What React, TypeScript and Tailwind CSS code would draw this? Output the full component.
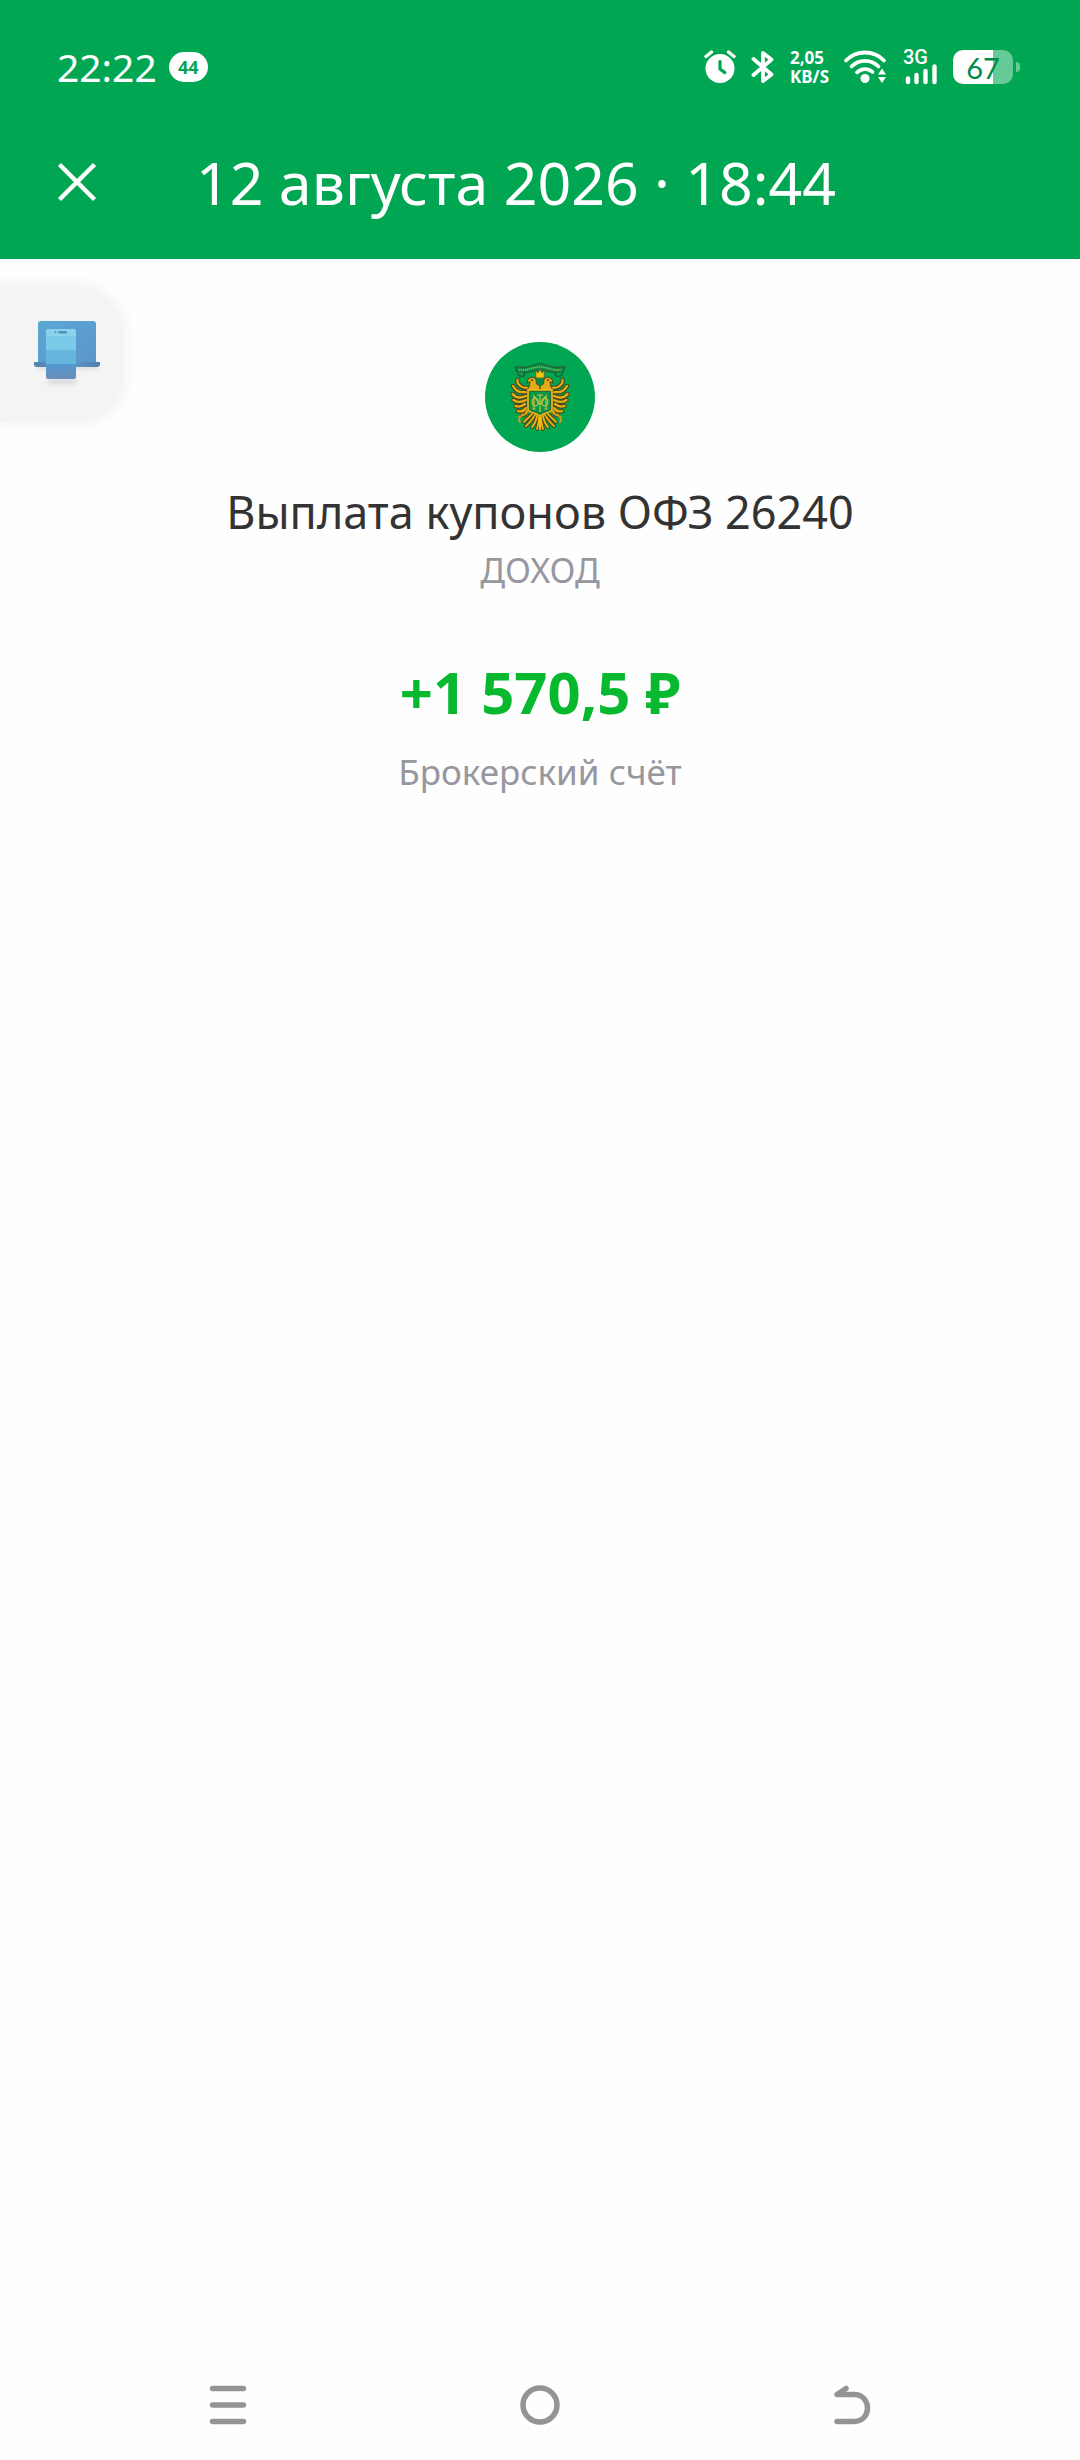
import type { ReactNode } from 'react'

const operation = {
  date: '12 августа 2026 · 18:44',
  title: 'Выплата купонов ОФЗ 26240',
  kind: 'ДОХОД',
  amount: '+1 570,5 ₽',
  account: 'Брокерский счёт',
}

function AlarmIcon() {
  return (
    <svg viewBox="0 0 32 34" className="h-[34px] w-8" fill="none" aria-hidden="true">
      <path d="M2 6.5 7.5 2M30 6.5 24.500 2" stroke="#fff" strokeWidth="3.400" strokeLinecap="round" />
      <circle cx="16" cy="18.500" r="14.500" fill="#fff" />
      <path d="M16 11.500v7.500l4.800 3.600" stroke="#00a651" strokeWidth="3.200" strokeLinecap="round" strokeLinejoin="round" />
    </svg>
  )
}

function BluetoothIcon() {
  return (
    <svg viewBox="0 0 24 34" className="h-[34px] w-6" fill="none" aria-hidden="true">
      <path d="M2.500 9 20.500 24.500 12 31V3l8.500 6.500L2.500 25" stroke="#fff" strokeWidth="3.800" strokeLinecap="round" strokeLinejoin="round" />
    </svg>
  )
}

function WifiIcon() {
  return (
    <svg viewBox="0 0 44 36" className="h-9 w-11" fill="none" aria-hidden="true">
      <path d="M3 11.500C13.500.800 30.500.800 41 11.500M8.500 17.500c7.500-7.600 19.500-7.600 27 0M14 23.300c4.500-4.300 11.500-4.300 15.500-.3" stroke="#fff" strokeWidth="3.800" strokeLinecap="round" />
      <circle cx="22" cy="29.500" r="4.500" fill="#fff" />
      <path d="M39 19.500 43 25.500h-8zM39 34l-4-6h8z" fill="#fff" />
    </svg>
  )
}

function SignalIcon() {
  return (
    <svg viewBox="0 0 34 22" className="h-[22px] w-[34px]" fill="none" aria-hidden="true">
      <path d="M5 15.500v3.500M13.500 12v7M22.500 8v11M31.500 3.500V19" stroke="#fff" strokeWidth="4.400" strokeLinecap="round" />
    </svg>
  )
}

function Battery() {
  return (
    <div className="flex items-center gap-[3px]">
      <div className="flex h-[34px] w-[60px] items-center justify-center rounded-[10px] bg-linear-to-r from-white from-67% to-[#66ca97] to-67% font-['Lato',sans-serif] text-[29px] leading-none text-[#008b4a]">
        67
      </div>
      <div className="h-2.5 w-1 rounded-r-full bg-[#66ca97]" />
    </div>
  )
}

function StatusBar() {
  return (
    <div className="flex h-[134px] items-center justify-between pr-[60px] pl-[57px]">
      <div className="flex items-center gap-3">
        <span className="text-[39px] leading-12">22:22</span>
        <span className="flex h-[30px] w-[39px] items-center justify-center rounded-full bg-white text-lg leading-none font-bold text-[#00a651]">44</span>
      </div>
      <div className="flex items-center">
        <AlarmIcon />
        <div className="ml-[15px]"><BluetoothIcon /></div>
        <div className="ml-[15px] flex flex-col text-[17px] leading-[19px] font-bold">
          <span>2,05</span>
          <span>KB/S</span>
        </div>
        <div className="ml-[14px]"><WifiIcon /></div>
        <div className="ml-4 flex flex-col">
          <span className="h-3.5 font-['Roboto',sans-serif] text-xl leading-4 font-medium">3G</span>
          <SignalIcon />
        </div>
        <div className="ml-4"><Battery /></div>
      </div>
    </div>
  )
}

const feathers =
  'M42 46C36 46 32 42 32.500 38M41 50c-7 1-11-2-13-6M41 54c-7 3-11 1-13.500-2M41 58c-5 3-10 2-12.500 0M40 62c-4 3-7 3-9.500 2M41 66c-2 3-5 4-8 3M42 69c-1 3-3 4-5 4'
const tailFeathers =
  'M50 73c-3 4-4 7-9 11M52 74c-1 5-2 8-5 11M54 75c0 5-1 8-2 12M47 72c-3 4-6 5-8 8'

function Emblem() {
  return (
    <svg viewBox="0 0 110 110" className="size-[110px]" fill="none" role="img" aria-label={operation.title}>
      <defs>
        <g id="half" strokeLinecap="round">
          <path d={feathers} stroke="#4b431c" strokeWidth="4.400" />
          <path d={tailFeathers} stroke="#4b431c" strokeWidth="3.800" />
          <path d={feathers} stroke="#e3ae12" strokeWidth="2.300" />
          <path d={tailFeathers} stroke="#e9b70f" strokeWidth="1.800" />
          {/* leg and claw */}
          <path d="M43 70c-2 3-6 3-9 5M37 74c-3 1-4 4-2 6" stroke="#c99c18" strokeWidth="1.800" />
          {/* head with beak */}
          <path d="m42 41 1.500-4.500 4-1.500 3.500 2 .5 5 3.500 2v5H41l3-4 1-5z" fill="#e2aa17" stroke="#574818" strokeWidth="1" />
          <circle cx="47" cy="38" r=".9" fill="#3e3517" />
        </g>
      </defs>
      <circle cx="55" cy="55" r="55" fill="#00a651" />
      {/* ribbon */}
      <path d="M30 25c4-1 6 1 10 .5 8-1.500 11-4 15-4s7 2.500 15 4c4 .5 6-1.500 10-.5l-2 5c-4-1-7 1-12 0-5-1-7-2-11-2s-6 1-11 2c-5 1-8-1-12 0z" fill="#07924a" stroke="#275a30" strokeWidth="1.200" />
      <path d="M34 28c6 1.500 13-3 21-3s15 4.500 21 3" stroke="#a9bd36" strokeWidth="1.400" strokeDasharray="1.200 .8" />
      <path d="M33 31c0 3 2 4 6 3l1-3M77 31c0 3-2 4-6 3l-1-3" stroke="#1f5f35" strokeWidth="1.600" />
      <use href="#half" />
      <use href="#half" transform="matrix(-1 0 0 1 110 0)" />
      <path d="M55 75v12" stroke="#edba0d" strokeWidth="2" strokeLinecap="round" />
      {/* crown */}
      <path d="m50.500 28 2.500 3 2-4 2 4 2.500-3-.5 8h-8z" fill="#f6c713" stroke="#63511b" strokeWidth=".8" />
      <path d="M51.500 37h7v4L55 44l-3.500-3z" fill="#078a43" />
      {/* shield with monogram */}
      <path d="M43 48h24v19c0 4-8 3-12 7-4-4-12-3-12-7z" fill="#06984a" stroke="#efb91b" strokeWidth="1.600" />
      <path d="M44.500 49.500h21v17.500c0 2.500-7 2-10.500 5-3.500-3-10.500-2.500-10.500-5z" stroke="#3f5a28" strokeWidth=".8" />
      <path d="M49 67V54l6 9 6-9v13M47.500 67h3M59.500 67h3M55 52.500V70M52 53h6" stroke="#c8c340" strokeWidth="1.200" />
      <ellipse cx="50.200" cy="60" rx="3" ry="4" stroke="#c8c340" strokeWidth="1.100" />
      <ellipse cx="59.800" cy="60" rx="3" ry="4" stroke="#c8c340" strokeWidth="1.100" />
    </svg>
  )
}

function DevicesIcon() {
  return (
    <svg viewBox="0 0 66 66" className="size-[66px]" aria-hidden="true">
      <defs>
        <linearGradient id="laptop" x1="0" y1="0" x2="1" y2="1">
          <stop stopColor="#5aa8d4" />
          <stop offset="1" stopColor="#5c94ca" />
        </linearGradient>
        <linearGradient id="base" x1="0" x2="1">
          <stop stopColor="#527fae" />
          <stop offset=".5" stopColor="#5b9bd0" />
          <stop offset="1" stopColor="#527fae" />
        </linearGradient>
        <linearGradient id="phone" x1="0" y1="0" x2="0" y2="1">
          <stop offset=".7" stopColor="#5498d1" />
          <stop offset="1" stopColor="#6a8fb8" />
        </linearGradient>
        <filter id="soft" x="-30%" y="-80%" width="160%" height="260%">
          <feGaussianBlur stdDeviation="2" />
        </filter>
      </defs>
      <path d="M3 44h60v4H3zM14 58h28v5H14z" fill="#d9d9dd" filter="url(#soft)" />
      <rect x="4" y="0" width="58" height="44" rx="3" fill="url(#laptop)" />
      <path d="M0 41h66v2c0 2-1 3-3 3H3c-2 0-3-1-3-3z" fill="url(#base)" />
      <rect x="12" y="8" width="30" height="50" rx="2.500" fill="url(#phone)" />
      <path d="M12 10.500q0-2.500 2.500-2.500h25q2.500 0 2.500 2.500V30H12z" fill="#7acbea" />
      <path d="M12 10.500q0-2.500 2.500-2.500h25q2.500 0 2.500 2.500V15H12z" fill="#89d4ec" />
      <path d="M12 29h30v14H12z" fill="#65b5dc" />
      <rect x="24" y="10" width="9" height="2.500" rx="1.200" fill="#5093bb" />
      <circle cx="21.500" cy="11.200" r="1" fill="#5093bb" />
    </svg>
  )
}

function NavButton({ label, children }: { label: string; children: ReactNode }) {
  return (
    <button type="button" aria-label={label} className="flex h-full items-center justify-center">
      <svg viewBox="0 0 40 40" className="size-10" fill="none" stroke="#949494" strokeWidth="5.500" strokeLinecap="round" strokeLinejoin="round">
        {children}
      </svg>
    </button>
  )
}

export default function App() {
  return (
    <div className="relative flex min-h-screen flex-col bg-[#fefefe] font-['Noto_Sans',sans-serif]">
      <header className="bg-[#00a651] text-white">
        <StatusBar />
        <div className="flex h-[125px] items-start pl-14">
          <button type="button" aria-label="Закрыть" className="flex h-24 w-[42px] items-center">
            <svg viewBox="0 0 42 42" className="size-[42px]" fill="none" stroke="currentColor" strokeWidth="4.500" aria-hidden="true">
              <path d="m3.500 3.500 35 35m0-35-35 35" />
            </svg>
          </button>
          <h1 className="ml-[98px] text-[59px] leading-24 whitespace-nowrap">{operation.date}</h1>
        </div>
      </header>

      <button type="button" aria-label="Устройства" className="absolute top-[286px] left-0 flex h-[136px] w-[124px] items-center justify-center rounded-r-[48px] bg-[#f4f4f4] pl-2.5 shadow-[0_0_12px_4px_#f5f5f5]">
        <DevicesIcon />
      </button>

      <main className="flex flex-1 flex-col items-center pt-[83px] text-center">
        <Emblem />
        <h2 className="mt-[30px] text-[45px] leading-[60px] text-[#333]">{operation.title}</h2>
        <p className="mt-1 text-[34px] leading-12 text-[#96979f]">{operation.kind}</p>
        <p className="mt-[62px] text-[58px] leading-[72px] font-bold text-[#08b92f]">{operation.amount}</p>
        <p className="mt-5 text-[35px] leading-12 text-[#96979f]">{operation.account}</p>
      </main>

      <nav className="grid h-[110px] grid-cols-3 px-[72px]">
        <NavButton label="Недавние">
          <path d="M4.500 3.500h31M4.500 20h31M4.500 36.500h31" />
        </NavButton>
        <NavButton label="Домой">
          <circle cx="20" cy="20" r="17" />
        </NavButton>
        <NavButton label="Назад">
          <path d="M14 3.500 5 9.500h17c18 0 18 27 0 27H5" />
        </NavButton>
      </nav>
    </div>
  )
}
